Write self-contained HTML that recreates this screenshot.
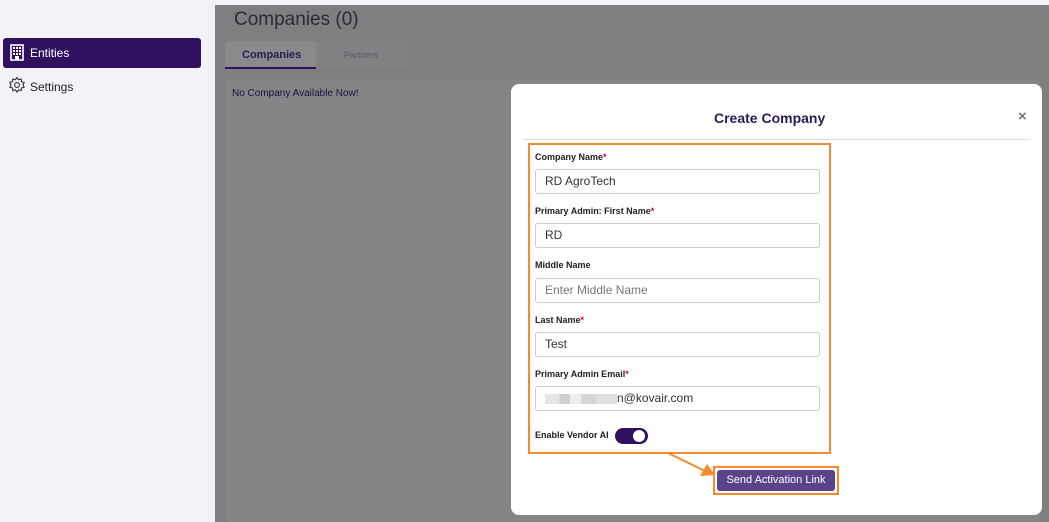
<!DOCTYPE html>
<html><head><meta charset="utf-8">
<style>
*{box-sizing:border-box;margin:0;padding:0}
body{width:1049px;height:522px;overflow:hidden;background:#f2f2f7;font-family:"Liberation Sans",sans-serif;position:relative}
.abs{position:absolute}
.nav{left:3px;top:38px;width:198px;height:30px;background:#2f1160;border-radius:3px;color:#fff;font-size:12px}
.main{left:215px;top:5px;width:834px;height:517px;background:#7f7f82}
.lbl{font-size:9px;font-weight:bold;color:#222;position:absolute;left:535px}
.lbl b{color:#e0001b}
.inp{position:absolute;left:535px;width:285px;height:25px;border:1px solid #ccc;border-radius:3px;background:#fff;font-size:12px;color:#333;padding-left:9px;line-height:23px}
</style></head><body>
<div class="abs nav">
<svg class="abs" style="left:7px;top:6px" width="14" height="17" viewBox="0 0 14 17"><rect x="1" y="1" width="12" height="15" fill="none" stroke="#fff" stroke-width="1.6"/><g fill="#fff"><rect x="3" y="3" width="2" height="2"/><rect x="6" y="3" width="2" height="2"/><rect x="9" y="3" width="2" height="2"/><rect x="3" y="6" width="2" height="2"/><rect x="6" y="6" width="2" height="2"/><rect x="9" y="6" width="2" height="2"/><rect x="3" y="9" width="2" height="2"/><rect x="6" y="9" width="2" height="2"/><rect x="9" y="9" width="2" height="2"/><rect x="5" y="12" width="4" height="4"/></g></svg>
<span class="abs" style="left:27px;top:8px">Entities</span></div>
<svg class="abs" style="left:8px;top:76px" width="18" height="18" viewBox="0 0 24 24" fill="none" stroke="#333" stroke-width="1.5"><circle cx="12" cy="12" r="3.2"/><path d="M12 2l2 3 3.5-1 .5 3.5 3.5 1-1.5 3.5 1.5 3-3.5 1-.5 3.5-3.5-1-2 3-2-3-3.5 1-.5-3.5-3.5-1 1.5-3-1.5-3.5 3.5-1 .5-3.5 3.5 1z"/></svg>
<span class="abs" style="left:30px;top:80px;font-size:12px;color:#222">Settings</span>
<div class="abs main"></div>
<div class="abs" style="left:234px;top:9px;font-size:19px;color:#2a2a33">Companies (0)</div>
<div class="abs" style="left:225px;top:41px;width:183px;height:28px;background:#828285;border-radius:4px 4px 0 0"></div>
<div class="abs" style="left:225px;top:41px;width:91px;height:28px;background:#8a8a8d;border-radius:4px 4px 0 0;border-bottom:2px solid #2f1160"></div>
<span class="abs" style="left:242px;top:49px;font-size:11px;font-weight:bold;color:#2a1a50">Companies</span>
<span class="abs" style="left:344px;top:50px;font-size:9px;color:#5a5a66">Partners</span>
<div class="abs" style="left:225px;top:80px;width:815px;height:442px;background:#858588;border-radius:4px"></div>
<span class="abs" style="left:232px;top:88px;font-size:10px;color:#1a1240">No Company Available Now!</span>
<div class="abs" style="left:511px;top:84px;width:531px;height:431px;background:#fff;border-radius:8px"></div>
<div class="abs" style="left:714px;top:110px;font-size:14px;font-weight:bold;color:#2a1a5a">Create Company</div>
<div class="abs" style="left:1018px;top:108px;font-size:15px;font-weight:bold;color:#777">×</div>
<div class="abs" style="left:524px;top:139px;width:505px;height:1px;background:#ddd"></div>
<div class="abs" style="left:528px;top:143px;width:303px;height:311px;border:2px solid #f58a2e"></div>
<div class="lbl" style="top:152px">Company Name<b>*</b></div>
<div class="inp" style="top:169px">RD AgroTech</div>
<div class="lbl" style="top:206px">Primary Admin: First Name<b>*</b></div>
<div class="inp" style="top:223px">RD</div>
<div class="lbl" style="top:260px">Middle Name</div>
<div class="inp" style="top:278px;color:#777">Enter Middle Name</div>
<div class="lbl" style="top:315px">Last Name<b>*</b></div>
<div class="inp" style="top:332px">Test</div>
<div class="lbl" style="top:369px">Primary Admin Email<b>*</b></div>
<div class="inp" style="top:386px"><span style="display:inline-block;width:72px;height:10px;background:linear-gradient(90deg,#e6e6e6 0 20%,#cfcfcf 20% 35%,#eee 35% 50%,#d5d5d5 50% 70%,#e0e0e0 70%);vertical-align:middle"></span>n@kovair.com</div>
<div class="lbl" style="top:430px">Enable Vendor AI</div>
<div class="abs" style="left:615px;top:428px;width:33px;height:16px;border-radius:8px;background:#2f1160"><div class="abs" style="left:18px;top:2px;width:12px;height:12px;border-radius:50%;background:#fff"></div></div>
<svg class="abs" style="left:660px;top:450px" width="60" height="30"><line x1="8" y1="3" x2="45" y2="21" stroke="#f58a2e" stroke-width="2"/><polygon points="55,25 40,26 47,14" fill="#f58a2e"/></svg>
<div class="abs" style="left:713px;top:466px;width:126px;height:29px;border:2px solid #f58a2e"></div>
<div class="abs" style="left:717px;top:470px;width:118px;height:21px;background:#5a4389;border-radius:3px;color:#fff;font-size:11px;text-align:center;line-height:21px">Send Activation Link</div>
</body></html>
